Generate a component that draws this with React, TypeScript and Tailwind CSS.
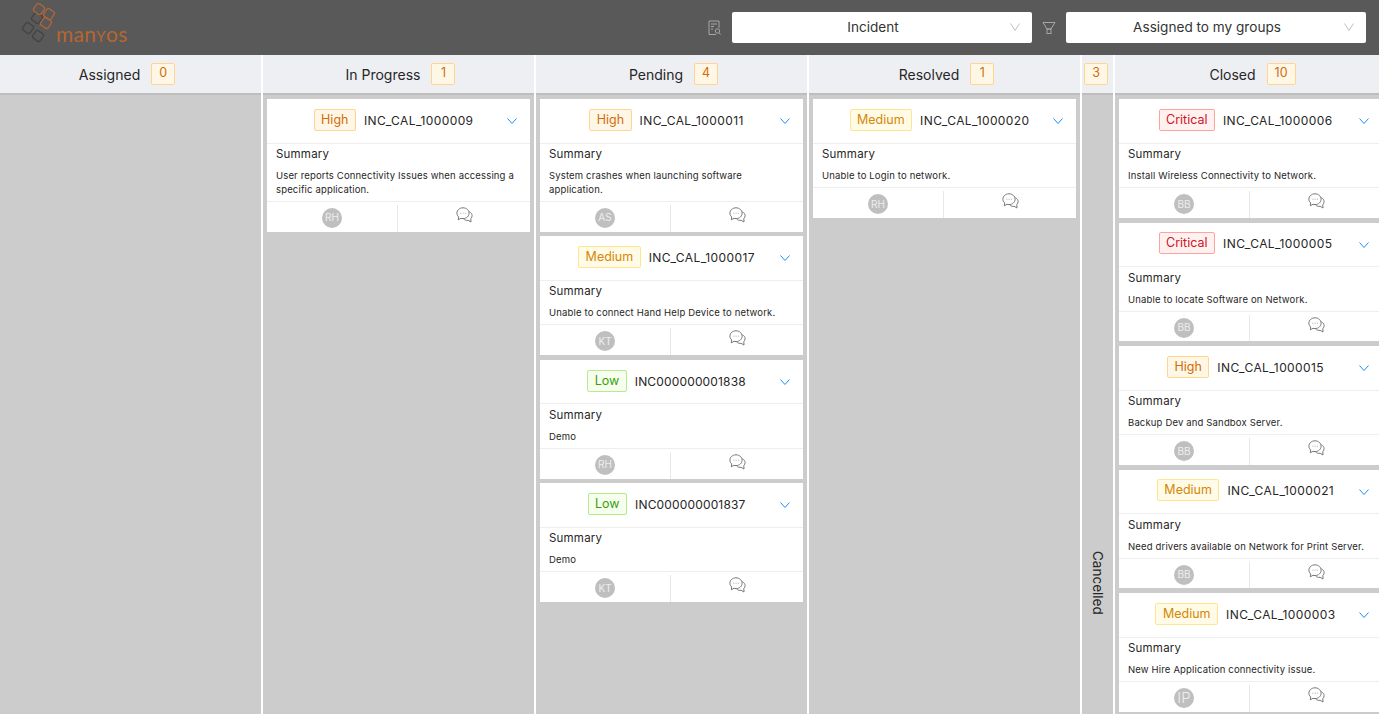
type Priority = 'Critical' | 'High' | 'Medium' | 'Low';

type Ticket = { priority: Priority; id: string; text: string; who: string };

const TAGS: Record<Priority, string> = {
  Critical: 'bg-[#fff1f0] border-[#ffa39e] text-[#cf1322]',
  High: 'bg-[#fff7e6] border-[#ffd591] text-[#d46b08]',
  Medium: 'bg-[#fffbe6] border-[#ffe58f] text-[#d48806]',
  Low: 'bg-[#f6ffed] border-[#b7eb8f] text-[#389e0d]',
};

const COLUMNS: { name: string; count: number; width: string; head: string; tickets: Ticket[] }[] = [
  { name: 'Assigned', count: 0, width: 'w-[261px]', head: 'pr-[7px]', tickets: [] },
  {
    name: 'In Progress',
    count: 1,
    width: 'w-[271px]',
    head: 'pl-[4px]',
    tickets: [{ priority: 'High', id: 'INC_CAL_1000009', text: 'User reports Connectivity Issues when accessing a specific application.', who: 'RH' }],
  },
  {
    name: 'Pending',
    count: 4,
    width: 'w-[271px]',
    head: 'pl-[4px]',
    tickets: [
      { priority: 'High', id: 'INC_CAL_1000011', text: 'System crashes when launching software application.', who: 'AS' },
      { priority: 'Medium', id: 'INC_CAL_1000017', text: 'Unable to connect Hand Help Device to network.', who: 'KT' },
      { priority: 'Low', id: 'INC000000001838', text: 'Demo', who: 'RH' },
      { priority: 'Low', id: 'INC000000001837', text: 'Demo', who: 'KT' },
    ],
  },
  {
    name: 'Resolved',
    count: 1,
    width: 'w-[271px]',
    head: 'pl-[4px]',
    tickets: [{ priority: 'Medium', id: 'INC_CAL_1000020', text: 'Unable to Login to network.', who: 'RH' }],
  },
];

const CLOSED: Ticket[] = [
  { priority: 'Critical', id: 'INC_CAL_1000006', text: 'Install Wireless Connectivity to Network.', who: 'BB' },
  { priority: 'Critical', id: 'INC_CAL_1000005', text: 'Unable to locate Software on Network.', who: 'BB' },
  { priority: 'High', id: 'INC_CAL_1000015', text: 'Backup Dev and Sandbox Server.', who: 'BB' },
  { priority: 'Medium', id: 'INC_CAL_1000021', text: 'Need drivers available on Network for Print Server.', who: 'BB' },
  { priority: 'Medium', id: 'INC_CAL_1000003', text: 'New Hire Application connectivity issue.', who: 'IP' },
];

function Logo() {
  return (
    <div className="flex h-full items-start">
      <svg width="42" height="44" viewBox="20 2 42 44" fill="none" strokeWidth="1.3" className="mt-[2px] -mr-[6px] shrink-0">
        <g stroke="#444444">
          <rect x="32.500" y="13.500" width="9" height="9" rx="2" transform="rotate(35 37 18)" />
          <rect x="23.500" y="23.500" width="9" height="9" rx="2" transform="rotate(35 28 28)" />
          <rect x="33.500" y="31.500" width="9" height="9" rx="2" transform="rotate(35 38 36)" />
        </g>
        <g stroke="#b0653a">
          <rect x="34.500" y="4.500" width="9" height="9" rx="2" transform="rotate(35 39 9)" />
          <rect x="44.500" y="9.500" width="9" height="9" rx="2" transform="rotate(35 49 14)" />
          <rect x="41.500" y="18.500" width="9" height="9" rx="2" transform="rotate(35 46 23)" />
        </g>
      </svg>
      <span className="mt-[23px] font-['Lato'] text-[21px] leading-[22px] font-normal tracking-[0.3px] text-[#b8662f]">
        man<span className="text-[15px]">Y</span>os
      </span>
    </div>
  );
}

function ReportIcon() {
  return (
    <svg width="14" height="16" viewBox="0 0 14 16" fill="none" stroke="#a6a6a6" strokeWidth="1">
      <path d="M8 14.500h-7v-13.500h10v7" />
      <path d="M3 4h6M3 6.500h3M3 9h2" />
      <circle cx="9.500" cy="11" r="2.200" />
      <path d="M11 12.800l1.800 1.800" />
    </svg>
  );
}

function FilterIcon() {
  return (
    <svg width="14" height="14" viewBox="0 0 14 14" fill="none" stroke="#a6a6a6" strokeWidth="1">
      <path d="M1 1.500h12l-4 6.500h-4z" />
      <rect x="5" y="8" width="4" height="4.500" />
    </svg>
  );
}

function Select({ label, width }: { label: string; width: string }) {
  return (
    <div className={`relative flex h-[31px] items-center justify-center rounded-[2px] bg-white pr-[18px] pb-px text-[13.600px] text-[#333] ${width}`}>
      {label}
      <svg width="10" height="8" viewBox="0 0 10 8" fill="none" stroke="#bfbfbf" strokeWidth="1" className="absolute top-[11px] right-[12px]">
        <path d="M0.500 0.500l4.500 7 4.500-7" />
      </svg>
    </div>
  );
}

function CommentIcon() {
  return (
    <svg width="17" height="16" viewBox="0 0 17 16" fill="none" stroke="#777777" strokeWidth="1">
      <path d="M7 .8c3.400 0 6.100 2.400 6.100 5.400s-2.700 5.400-6.100 5.400c-.7 0-1.400-.1-2-.3l-2.700 1.500.4-2.900C1.500 8.800.9 7.600.9 6.200.9 3.200 3.600.8 7 .8z" />
      <path d="M13.400 4.800c1.600.8 2.700 2.200 2.700 3.800 0 1.100-.5 2.200-1.300 3l.2 3.400-2.900-1.700c-1.700.3-3.400-.2-4.400-1.300" />
      <path d="M4.500 6.200h.8M6.700 6.200h.8M8.900 6.200h.8" stroke="#999999" />
    </svg>
  );
}

function Count({ value }: { value: number }) {
  return (
    <span className="flex h-[22px] min-w-[24px] items-center justify-center rounded-[2px] border border-[#ffd591] bg-[#fff7e6] px-[7px] pb-px text-[12.500px] text-[#d46b08]">
      {value}
    </span>
  );
}

function Card({ t }: { t: Ticket }) {
  const numeric = t.id.startsWith('INC0');
  return (
    <div className="w-[263px] shrink-0 bg-white">
      <div className="relative flex h-[44.500px] items-center justify-center border-b border-[#eeeeee] pr-[10px]">
        <span className={`mr-[8px] mb-[2px] flex h-[22px] items-center rounded-[2px] border px-[6.500px] pt-px text-[12.500px] ${TAGS[t.priority]}`}>{t.priority}</span>
        <span className={`text-[12px] text-[#262626] ${numeric ? 'tracking-[0.15px]' : 'tracking-[0.4px]'}`}>{t.id}</span>
        <svg width="10" height="6" viewBox="0 0 10 6" fill="none" stroke="#1890ff" strokeWidth="1" className="absolute top-[19px] right-[13px]">
          <path d="M0.500 0.500l4.500 5 4.500-5" />
        </svg>
      </div>
      <div className="border-b border-[#eeeeee] px-[9px] pb-[4.250px]">
        <p className="pt-[3.500px] text-[11.500px] leading-[14px] tracking-[0.2px] text-[#262626]">Summary</p>
        <p className="mt-[8px] text-[9.500px] leading-[13.750px] tracking-[0.16px] text-[#262626]">{t.text}</p>
      </div>
      <div className="flex h-[29.750px] pt-[3px]">
        <div className="flex w-[131px] items-start justify-center border-r border-[#e8e8e8] pt-[3px]">
          <span className={`flex h-[20px] w-[20px] items-center justify-center rounded-full bg-[#bfbfbf] text-[#eeeeee] ${t.who === 'IP' ? 'text-[15px] font-light' : 'text-[10px]'}`}>
            {t.who}
          </span>
        </div>
        <div className="flex flex-1 justify-center pt-[2px]">
          <CommentIcon />
        </div>
      </div>
    </div>
  );
}

function ColumnHead({ name, count, head }: { name: string; count: number; head: string }) {
  return (
    <div className={`flex h-[40px] w-full shrink-0 items-center justify-center gap-[11px] border-b-2 border-[#bdbdbd] bg-[#edeff3] text-[14px] text-[#262626] ${head}`}>
      <span>{name}</span>
      <Count value={count} />
    </div>
  );
}

export default function App() {
  return (
    <div className="flex h-screen w-full flex-col overflow-hidden bg-white font-['Inter',sans-serif]">
      <header className="flex h-[55px] shrink-0 items-center bg-[#595959] pr-[13px] pl-[20px]">
        <Logo />
        <div className="ml-auto flex items-center">
          <ReportIcon />
          <div className="ml-[10px]">
            <Select label="Incident" width="w-[300px]" />
          </div>
          <div className="mx-[10px]">
            <FilterIcon />
          </div>
          <Select label="Assigned to my groups" width="w-[300px]" />
        </div>
      </header>

      <div className="flex min-h-0 flex-1 gap-[2px]">
        {COLUMNS.map((c) => (
          <section key={c.name} className={`flex shrink-0 flex-col ${c.width}`}>
            <ColumnHead name={c.name} count={c.count} head={c.head} />
            <div className="flex flex-1 flex-col gap-[4.750px] bg-[#cccccc] p-[4px]">
              {c.tickets.map((t) => (
                <Card key={t.id} t={t} />
              ))}
            </div>
          </section>
        ))}

        <section className="flex w-[31px] shrink-0 flex-col">
          <div className="flex h-[40px] items-center justify-center border-b-2 border-[#bdbdbd] bg-[#edeff3] pr-[3px]">
            <Count value={3} />
          </div>
          <div className="flex flex-1 items-end justify-center bg-[#cccccc] pb-[99px]">
            <span className="text-[13.500px] text-[#262626] [writing-mode:vertical-rl]">Cancelled</span>
          </div>
        </section>

        <section className="flex w-[271px] shrink-0 flex-col">
          <ColumnHead name="Closed" count={10} head="pl-[4px]" />
          <div className="flex flex-1 flex-col gap-[4.750px] bg-[#cccccc] p-[4px]">
            {CLOSED.map((t) => (
              <Card key={t.id} t={t} />
            ))}
          </div>
        </section>
      </div>
    </div>
  );
}
